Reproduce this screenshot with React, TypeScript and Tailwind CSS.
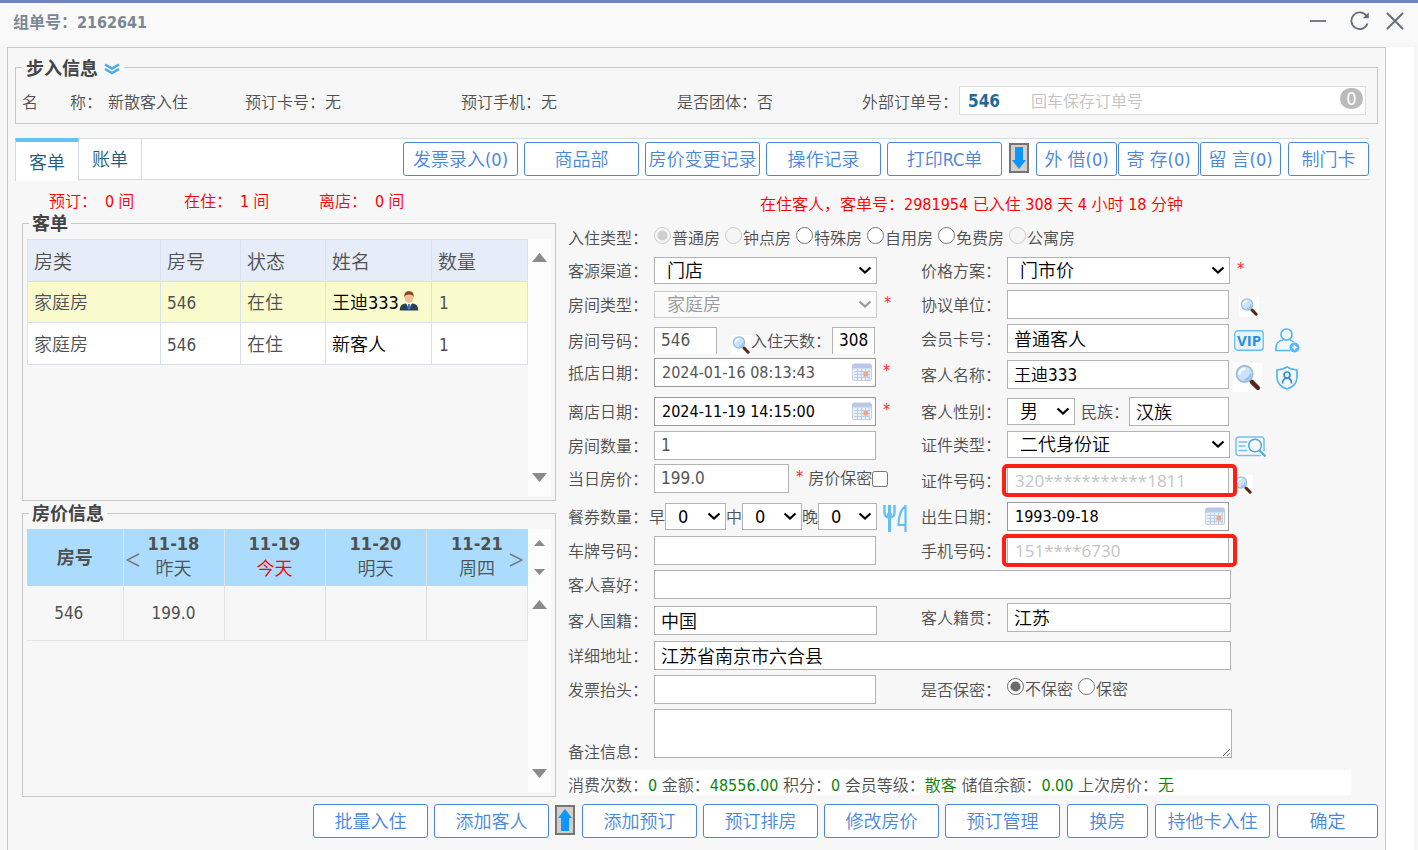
import React from 'react';
import type { ReactNode } from 'react';

const field = 'min-w-0 border border-[#b3b3b3] bg-white px-1.5 pb-0.5 outline-none';

function DoubleChevron() {
  return (
    <svg width="16" height="12" viewBox="0 0 16 12" fill="none" stroke="#4aa9e9" strokeWidth="2.400">
      <path d="M1 1.500 8 5.500 15 1.500" />
      <path d="M1 6 8 10 15 6" />
    </svg>
  );
}

function Magnifier({ className }: { className: string }) {
  return (
    <svg className={className} viewBox="0 0 20 20">
      <rect width="20" height="20" fill="#fff" />
      <path d="M11.500 11.500 17 17" stroke="#c9a58f" strokeWidth="2" />
      <path d="M13 13 17.200 17.200" stroke="#5a2312" strokeWidth="3" strokeLinecap="round" />
      <circle cx="8" cy="7.500" r="5.600" fill="#c9e3fa" stroke="#9dbcdc" strokeWidth="1.300" />
      <path d="M4.500 8a3.600 3.600 0 0 1 4-4" stroke="#fff" strokeWidth="1.600" fill="none" />
      <path d="M8 11.500a4 4 0 0 0 4-4" stroke="#8cc0f0" strokeWidth="1.400" fill="none" />
    </svg>
  );
}

function CalendarIcon() {
  return (
    <svg width="20" height="18" viewBox="0 0 20 18" className="pointer-events-none absolute right-1 top-[5px]">
      <rect x="0.500" y="1.500" width="19" height="16" rx="1.500" fill="#e9f0fa" stroke="#c9cfdb" />
      <rect x="0.500" y="0.500" width="19" height="5" rx="1.500" fill="#b9c8e8" />
      <path d="M2 8.500h16M2 11.500h16M2 14.500h16M5.500 6v11M9.500 6v11M13.500 6v11M17 6v11" stroke="#b3c7e8" strokeWidth="0.900" />
      <rect x="11.500" y="9" width="4.500" height="4.500" fill="#f6a488" />
    </svg>
  );
}

function PersonIcon() {
  return (
    <svg width="20" height="20" viewBox="0 0 20 20" className="mb-1">
      <path d="M.8 19.500c0-4.600 1.600-6.500 5.700-7h7c4.100.5 5.700 2.400 5.700 7z" fill="#2f3e52" />
      <path d="M7 12h6l-3 6z" fill="#fff" />
      <path d="M9.200 13h1.600l.8 4-1.600 2.500L8.400 17z" fill="#2b7bd6" />
      <ellipse cx="10" cy="6.500" rx="4.200" ry="5.400" fill="#f3bf98" />
      <path d="M5.500 6.500C4.800 2 7 .3 10 .3s5.400 1.700 4.500 6.200c-.5-2.300-1.500-3-4.500-3s-4 .7-4.500 3z" fill="#8a4323" />
    </svg>
  );
}

function ArrowSquare({ down, label }: { down?: boolean; label: string }) {
  return (
    <button type="button" aria-label={label} className="flex h-[30px] w-5 items-center justify-center border-2 border-[#757575] bg-[#d4d0c8]">
      <svg width="14" height="22" viewBox="0 0 14 22" className={down ? 'shrink-0' : 'shrink-0 rotate-180'}>
        <path d="M3 0h8v13h3l-7 9-7-9h3z" fill="#0a97ff" />
      </svg>
    </button>
  );
}

function Triangle({ up, small }: { up?: boolean; small?: boolean }) {
  return (
    <svg width={small ? 11 : 15} height={small ? 6 : 9} viewBox="0 0 14 8" preserveAspectRatio="none">
      <path d={up ? 'M7 0 14 8H0z' : 'M0 0h14L7 8z'} fill="#8b8b8b" />
    </svg>
  );
}

function Select({ id, value, className, disabled }: { id: string; value: string; className: string; disabled?: boolean }) {
  return (
    <span className={`relative block h-[27px] ${className}`}>
      <select
        id={id}
        disabled={disabled}
        className="block h-full w-full appearance-none border border-[#b3b3b3] bg-white pl-3 text-[18px] leading-[24px] text-black opacity-100 outline-none disabled:border-[#ccc] disabled:bg-[#fafafa] disabled:text-[#999]"
      >
        <option>{value}</option>
      </select>
      <svg width="14" height="9" viewBox="0 0 14 9" className="pointer-events-none absolute right-[5px] top-[9px]">
        <path d="M1.500 1.500 7 6.500l5.500-5" fill="none" stroke={disabled ? '#999' : '#000'} strokeWidth="2.200" />
      </svg>
    </span>
  );
}

function Row({ label, id, className, children }: { label: string; id?: string; className: string; children: ReactNode }) {
  return (
    <div className={`flex items-center ${className}`}>
      <label htmlFor={id} className="w-[86px] shrink-0 whitespace-nowrap pt-0.5">{label}</label>
      {children}
    </div>
  );
}

function Star() {
  return <span className="mb-1 ml-[7px] text-[16px] leading-4 text-[#ff2a2a]">*</span>;
}

function Radio({ name, label, checked, disabled }: { name: string; label: string; checked?: boolean; disabled?: boolean }) {
  return (
    <label className="flex items-start gap-px whitespace-nowrap">
      <input type="radio" name={name} defaultChecked={checked} disabled={disabled} className="-mt-px size-[17px] accent-[#6b6b6b]" />
      <span className="leading-[22px]">{label}</span>
    </label>
  );
}

function ActionButton({ children, className }: { children: ReactNode; className: string }) {
  return (
    <button type="button" className={`h-[34px] whitespace-nowrap rounded-[3px] border border-[#4a87dc] bg-white pt-0.5 text-[18px] leading-[30px] text-[#4a87dc] ${className}`}>
      {children}
    </button>
  );
}

function DateField({ id, value, muted }: { id: string; value: string; muted?: boolean }) {
  return (
    <span className="relative block h-[29px] w-[222px]">
      <input id={id} defaultValue={value} className={`h-full w-full border border-[#999] bg-white pl-[7px] text-[16px] outline-none ${muted ? 'text-[#555]' : 'text-black'}`} />
      <CalendarIcon />
    </span>
  );
}

function MarkedField({ id, value }: { id: string; value: string }) {
  return (
    <span className="relative block h-[29px] w-[222px]">
      <input id={id} placeholder={value} className="h-full w-full border border-[#b3b3b3] bg-white pl-[7px] font-['Open_Sans',sans-serif] text-[17px] font-normal outline-none placeholder:text-[#c4c4c4]" />
      <span className="pointer-events-none absolute -inset-y-0.5 -left-[5px] -right-2 z-10 rounded-[5px] border-4 border-[#ff2014]" />
    </span>
  );
}

const guests = [
  { type: '家庭房', room: '546', state: '在住', name: '王迪333', count: '1', active: true },
  { type: '家庭房', room: '546', state: '在住', name: '新客人', count: '1', active: false },
];

const days = [
  { date: '11-18', name: '昨天', price: '199.0' },
  { date: '11-19', name: '今天', price: '' },
  { date: '11-20', name: '明天', price: '' },
  { date: '11-21', name: '周四', price: '' },
];

const stats = [
  ['消费次数：', '0'],
  ['金额：', '48556.00'],
  ['积分：', '0'],
  ['会员等级：', '散客'],
  ['储值余额：', '0.00'],
  ['上次房价：', '无'],
];

function GuestPanel() {
  return (
    <fieldset className="h-[289px] border border-[#c8c8c8] px-1">
      <legend className="ml-0.5 px-[3px] pt-0.5 text-[18px] font-bold leading-5 text-[#444]">客单</legend>
      <div className="mt-[5px] flex h-[257px]">
        <div className="flex-1">
          <table className="w-full table-fixed border-collapse text-left text-[18px]">
            <colgroup>
              <col className="w-[133px]" />
              <col className="w-20" />
              <col className="w-[85px]" />
              <col className="w-[106px]" />
              <col />
            </colgroup>
            <thead>
              <tr className="h-[42px] bg-[#e6edf9] text-[19px]">
                {['房类', '房号', '状态', '姓名', '数量'].map((h) => (
                  <th key={h} className="border border-[#d8e0ee] px-1.5 pt-0.5 font-[350] leading-6">{h}</th>
                ))}
              </tr>
            </thead>
            <tbody>
              {guests.map((g) => (
                <tr key={g.name} className={g.active ? 'h-[41px] bg-[#fafbcd]' : 'h-[42px] bg-white'}>
                  <td className="border border-[#d8e0ee] px-1.5 pt-0.5 leading-6">{g.type}</td>
                  <td className="border border-[#d8e0ee] px-1.5 pt-0.5 text-[17px] leading-6">{g.room}</td>
                  <td className="border border-[#d8e0ee] px-1.5 pt-0.5 leading-6">{g.state}</td>
                  <td className="border border-[#d8e0ee] px-1.5 pt-0.5 leading-6 text-black">
                    <span className="flex items-center">
                      {g.name}
                      {g.active && <PersonIcon />}
                    </span>
                  </td>
                  <td className="border border-[#d8e0ee] px-[7px] pt-0.5 text-[17px] leading-6">{g.count}</td>
                </tr>
              ))}
            </tbody>
          </table>
        </div>
        <div className="flex w-[23px] flex-col items-center justify-between bg-[#fcfcfc] py-3.5">
          <Triangle up />
          <Triangle />
        </div>
      </div>
    </fieldset>
  );
}

function PricePanel() {
  return (
    <fieldset className="mt-px h-[295px] border border-[#c8c8c8] px-1">
      <legend className="ml-0.5 px-[3px] pt-0.5 text-[18px] font-bold leading-5 text-[#444]">房价信息</legend>
      <div className="mt-[5px] flex h-[263px]">
        <div className="flex-1">
          <table className="w-full table-fixed border-collapse text-center">
            <colgroup>
              <col className="w-24" />
              <col className="w-[101px]" />
              <col className="w-[101px]" />
              <col className="w-[101px]" />
              <col />
            </colgroup>
            <thead>
              <tr className="h-[57px] bg-[#acdcfd] text-[18px]">
                <th className="font-bold">房号</th>
                {days.map((d, i) => (
                  <th key={d.date} className="relative border-l border-[#e2e2e2] p-0 pb-0.5 font-[350]">
                    <span className="block font-bold leading-6">{d.date}</span>
                    <span className={d.name === '今天' ? 'block leading-[26px] text-[#ff0000]' : 'block leading-[26px]'}>{d.name}</span>
                    {i === 0 && (
                      <button type="button" aria-label="前几天" className="absolute left-0.5 top-6">
                        <svg width="14" height="14" viewBox="0 0 14 14" fill="none" stroke="#777" strokeWidth="1.500"><path d="M13 1 1 7l12 6" /></svg>
                      </button>
                    )}
                    {i === 3 && (
                      <button type="button" aria-label="后几天" className="absolute right-[5px] top-6">
                        <svg width="14" height="14" viewBox="0 0 14 14" fill="none" stroke="#777" strokeWidth="1.500"><path d="M1 1l12 6-12 6" /></svg>
                      </button>
                    )}
                  </th>
                ))}
              </tr>
            </thead>
            <tbody>
              <tr className="h-[54px] border-b border-[#e2e2e2] text-[17px]">
                <td className="pr-3">546</td>
                {days.map((d) => (
                  <td key={d.date} className="border-x border-[#e2e2e2] p-0">{d.price}</td>
                ))}
              </tr>
            </tbody>
          </table>
        </div>
        <div className="flex w-[23px] flex-col items-center bg-[#fcfcfc]">
          <div className="flex h-[57px] flex-col items-center justify-between py-[11px]">
            <Triangle up small />
            <Triangle small />
          </div>
          <div className="flex flex-1 flex-col items-center justify-between py-3.5">
            <Triangle up />
            <Triangle />
          </div>
        </div>
      </div>
    </fieldset>
  );
}

function GuestForm() {
  return (
    <form className="min-w-0 flex-1 pr-[27px]">
      <div className="flex h-12 items-center whitespace-nowrap pl-48 pt-0.5 text-[#ff0000]">
        在住客人，客单号：2981954 已入住 308 天 4 小时 18 分钟
      </div>
      <div className="flex h-5 items-start">
        <span className="w-[86px] shrink-0 leading-[22px]">入住类型：</span>
        <div className="flex gap-[5px]">
          <Radio name="stay" label="普通房" checked disabled />
          <Radio name="stay" label="钟点房" disabled />
          <Radio name="stay" label="特殊房" />
          <Radio name="stay" label="自用房" />
          <Radio name="stay" label="免费房" />
          <Radio name="stay" label="公寓房" disabled />
        </div>
      </div>

      <div className="mt-[9px] grid grid-cols-[353px_1fr]">
        <div>
          <Row label="客源渠道：" id="channel" className="h-[27px]">
            <Select id="channel" value="门店" className="w-[223px]" />
          </Row>
          <Row label="房间类型：" id="roomType" className="mt-[7px] h-[27px]">
            <Select id="roomType" value="家庭房" className="w-[223px]" disabled />
            <Star />
          </Row>
          <Row label="房间号码：" id="roomNo" className="mt-[9px] h-[27px]">
            <input id="roomNo" defaultValue="546" className={`${field} h-full w-[63px] border-b-0 text-[17px] text-[#555]`} />
            <Magnifier className="ml-3.5 mt-2 size-5 shrink-0" />
            <label htmlFor="nights" className="w-[81px] whitespace-nowrap pt-0.5">入住天数：</label>
            <input id="nights" defaultValue="308" className={`${field} h-full w-[43px] border-b-0 text-[17px] text-black`} />
          </Row>
          <Row label="抵店日期：" id="arrive" className="mt-1 h-[29px]">
            <DateField id="arrive" value="2024-01-16 08:13:43" muted />
            <Star />
          </Row>
          <Row label="离店日期：" id="leave" className="mt-2.5 h-[29px]">
            <DateField id="leave" value="2024-11-19 14:15:00" />
            <Star />
          </Row>
          <Row label="房间数量：" id="rooms" className="mt-[5px] h-[29px]">
            <input id="rooms" defaultValue="1" className={`${field} h-full w-[222px] text-[17px] text-[#555]`} />
          </Row>
          <Row label="当日房价：" id="price" className="mt-1 h-[29px]">
            <input id="price" defaultValue="199.0" className={`${field} h-full w-[135px] text-[17px] text-[#555]`} />
            <Star />
            <label htmlFor="hidePrice" className="ml-[5px] whitespace-nowrap">房价保密</label>
            <input id="hidePrice" type="checkbox" className="size-4" />
          </Row>
          <div className="mt-2.5 flex h-[27px] items-center">
            <span className="w-[81px] shrink-0 pt-0.5">餐券数量：</span>
            <label htmlFor="breakfast" className="pt-0.5">早</label>
            <Select id="breakfast" value="0" className="w-[61px]" />
            <label htmlFor="lunch" className="pt-0.5">中</label>
            <Select id="lunch" value="0" className="w-[60px]" />
            <label htmlFor="dinner" className="pt-0.5">晚</label>
            <Select id="dinner" value="0" className="w-[59px]" />
            <svg width="24" height="27" viewBox="0 0 24 27" fill="none" stroke="#63bff7" strokeWidth="2.200" className="ml-1.5 mt-1 shrink-0">
              <path d="M1.500 0v8c0 3 2 4.500 5 4.500s5-1.500 5-4.500V0" strokeWidth="2.400" />
              <path d="M6.500 0v27" strokeWidth="3" />
              <path d="M4 8.500h5v4H4z" fill="#63bff7" stroke="none" />
              <path d="M22.500 0v27M22.500 1.500c-4 2-7 9-7 18.500h7" />
            </svg>
          </div>
          <Row label="车牌号码：" id="plate" className="mt-1.5 h-[29px]">
            <input id="plate" className={`${field} h-full w-[222px] text-[18px] text-black`} />
          </Row>
        </div>

        <div>
          <Row label="价格方案：" id="plan" className="h-[27px]">
            <Select id="plan" value="门市价" className="w-[223px]" />
            <Star />
          </Row>
          <Row label="协议单位：" id="company" className="mt-1.5 h-[29px]">
            <input id="company" className={`${field} h-full w-[222px] text-[18px] text-black`} />
            <Magnifier className="ml-2.5 mt-1 size-5 shrink-0" />
          </Row>
          <Row label="会员卡号：" id="card" className="mt-[5px] h-[29px]">
            <input id="card" defaultValue="普通客人" className={`${field} h-full w-[222px] text-[18px] text-black`} />
            <svg width="30" height="21" viewBox="0 0 30 21" className="ml-[5px] mt-1 shrink-0">
              <rect x="0.750" y="0.750" width="28.500" height="19.500" rx="3" fill="#e6f4fe" stroke="#66bdf2" strokeWidth="1.300" />
              <text x="15" y="16" textAnchor="middle" fontFamily="Open Sans, sans-serif" fontWeight="700" fontSize="15" fill="#2a8fdd">VIP</text>
            </svg>
            <svg width="25" height="25" viewBox="0 0 25 25" className="ml-[11px] mt-1 shrink-0" fill="none" stroke="#4db8f8" strokeWidth="1.700">
              <circle cx="11.500" cy="6.500" r="5.500" />
              <path d="M15 22.500H1v-2.500c0-4.500 3-7.500 7-8M15 12c1.500.3 2.500 1 3.500 2" />
              <circle cx="19.500" cy="19.500" r="5" fill="#4db8f8" stroke="none" />
              <path d="M19.500 16.800v5.400M16.800 19.500h5.400" stroke="#fff" strokeWidth="1.400" />
            </svg>
          </Row>
          <Row label="客人名称：" id="guestName" className="mt-[7px] h-[29px]">
            <input id="guestName" defaultValue="王迪333" className={`${field} h-full w-[222px] text-[17px] text-black`} />
            <Magnifier className="ml-1 mt-1.5 size-[29px] shrink-0" />
            <svg width="22" height="24" viewBox="0 0 22 24" className="ml-3.5 mt-1.5 shrink-0" fill="none" stroke="#4db8f8" strokeWidth="1.700">
              <path d="M11 1c3 2 6 2.800 10 3v7c0 6-4 10-10 12C5 21 1 17 1 11V4c4-.2 7-1 10-3z" />
              <circle cx="11" cy="9" r="3" stroke="#2f8fd6" />
              <path d="M6.500 17.500c0-3 1.500-5.300 4.500-5.300s4.500 2.300 4.500 5.300" stroke="#2f8fd6" />
            </svg>
          </Row>
          <Row label="客人性别：" id="sex" className="mt-2 h-[29px]">
            <Select id="sex" value="男" className="w-[68px]" />
            <label htmlFor="nation" className="ml-1.5 w-12 whitespace-nowrap pt-0.5">民族：</label>
            <input id="nation" defaultValue="汉族" className={`${field} h-full w-[100px] text-[18px] text-black`} />
          </Row>
          <Row label="证件类型：" id="idType" className="mt-[5px] h-[27px]">
            <Select id="idType" value="二代身份证" className="w-[223px]" />
            <svg width="31" height="21" viewBox="0 0 31 21" className="ml-[5px] mt-1 shrink-0" fill="none" stroke="#6fc3f5" strokeWidth="1.500">
              <path d="M26 19.500H3.500a2.500 2.500 0 0 1-2.500-2.500V3.500A2.500 2.500 0 0 1 3.500 1h23A2.500 2.500 0 0 1 29 3.500V15" />
              <path d="M3.500 6h9M3.500 10h7M3.500 14.500h9" />
              <circle cx="20" cy="9.500" r="6.300" stroke="#45a8ea" />
              <path d="M24.500 14.500l6 6" stroke="#45a8ea" strokeWidth="2" />
            </svg>
          </Row>
          <Row label="证件号码：" id="idNo" className="mt-2 h-[29px]">
            <MarkedField id="idNo" value="320***********1811" />
            <Magnifier className="ml-1 mt-2 size-5 shrink-0" />
          </Row>
          <Row label="出生日期：" id="birth" className="mt-[7px] h-[29px]">
            <DateField id="birth" value="1993-09-18" />
          </Row>
          <Row label="手机号码：" id="phone" className="mt-[5px] h-[29px]">
            <MarkedField id="phone" value="151****6730" />
          </Row>
        </div>
      </div>

      <Row label="客人喜好：" id="likes" className="mt-[5px] h-[29px]">
        <input id="likes" className={`${field} h-full w-[577px] text-[18px] text-black`} />
      </Row>
      <div className="mt-1 grid grid-cols-[353px_1fr]">
        <Row label="客人国籍：" id="country" className="mt-[3px] h-[29px]">
          <input id="country" defaultValue="中国" className={`${field} h-full w-[223px] text-[18px] text-black`} />
        </Row>
        <Row label="客人籍贯：" id="origin" className="h-[29px]">
          <input id="origin" defaultValue="江苏" className={`${field} h-full w-[224px] text-[18px] text-black`} />
        </Row>
      </div>
      <Row label="详细地址：" id="address" className="mt-1.5 h-[29px]">
        <input id="address" defaultValue="江苏省南京市六合县" className={`${field} h-full w-[577px] text-[18px] text-black`} />
      </Row>
      <div className="mt-[5px] grid grid-cols-[353px_1fr]">
        <Row label="发票抬头：" id="invoice" className="h-[29px]">
          <input id="invoice" className={`${field} h-full w-[222px] text-[18px] text-black`} />
        </Row>
        <Row label="是否保密：" className="h-[29px]">
          <div className="flex gap-[5px]">
            <Radio name="secret" label="不保密" checked />
            <Radio name="secret" label="保密" />
          </div>
        </Row>
      </div>
      <div className="mt-[5px] flex items-end">
        <label htmlFor="remark" className="w-[86px] shrink-0 leading-[10px]">备注信息：</label>
        <textarea id="remark" className="block h-[49px] w-[578px] border border-[#b3b3b3] bg-white outline-none" />
      </div>
      <div className="mt-3 h-[25px] whitespace-nowrap bg-white leading-8">
        {stats.map(([label, value]) => (
          <React.Fragment key={label}>
            {label}
            <span className="text-[#0a850a]">{value}</span>{' '}
          </React.Fragment>
        ))}
      </div>
    </form>
  );
}

export default function App() {
  return (
    <div className="flex min-h-screen flex-col overflow-hidden border-t-[3px] border-[#6f86bb] bg-[#f7f7f7] font-['DejaVu_Sans_Condensed','Noto_Sans_CJK_SC',sans-serif] text-[16px] font-[350] leading-5 text-[#505050]">
      <header className="flex h-10 shrink-0 items-center justify-between bg-[#f9f9fa] pl-[13px] pr-3.5">
        <h1 className="font-bold text-[#7b8792]">组单号：2162641</h1>
        <div className="mb-1 flex items-center text-[#666e78]">
          <button type="button" aria-label="最小化">
            <svg width="16" height="18" viewBox="0 0 16 18" stroke="currentColor" strokeWidth="1.800"><path d="M0 9h16" /></svg>
          </button>
          <button type="button" aria-label="刷新" className="ml-6">
            <svg width="20" height="20" viewBox="0 0 20 20" fill="none" stroke="currentColor" strokeWidth="1.800">
              <path d="M17.500 12.500A8.300 8.300 0 1 1 16.500 5" />
              <path d="M18.800 1.500v5.700h-6z" fill="currentColor" stroke="none" />
            </svg>
          </button>
          <button type="button" aria-label="关闭" className="ml-4">
            <svg width="18" height="18" viewBox="0 0 18 18" fill="none" stroke="currentColor" strokeWidth="2"><path d="M1 1l16 16M17 1 1 17" /></svg>
          </button>
        </div>
      </header>

      <div className="mt-1 flex flex-1 pl-[7px] pr-1">
        <main className="min-w-0 flex-1 border border-b-0 border-[#c8c8c8] px-[7px] pt-[7px]">
          <fieldset className="border border-[#c8c8c8] pb-2 pl-1.5 pr-[11px]">
            <legend className="flex items-center gap-1.5 px-1 pt-1 text-[18px] font-bold leading-5 text-[#444]">
              步入信息
              <DoubleChevron />
            </legend>
            <div className="mt-[7px] grid h-[29px] grid-cols-[223fr_216fr_216fr_185fr_504fr] items-center whitespace-nowrap">
              <span className="flex gap-1.5 pt-1"><span className="whitespace-pre">名　　称：</span><span>新散客入住</span></span>
              <span className="pt-1">预订卡号：无</span>
              <span className="pt-1">预订手机：无</span>
              <span className="pt-1">是否团体：否</span>
              <span className="flex h-full items-center">
                <label htmlFor="outer" className="w-[97px] shrink-0 pt-1">外部订单号：</label>
                <span className="flex h-full flex-1 items-center border border-[#ddd] bg-white pl-2 pr-0.5">
                  <b className="w-[63px] shrink-0 text-[17px] font-bold text-[#1d6a9c]">546</b>
                  <input id="outer" placeholder="回车保存订单号" className="min-w-0 flex-1 pt-0.5 outline-none placeholder:text-[#c4c4c4]" />
                  <span className="mb-1 flex h-[21px] w-[23px] items-center justify-center rounded-full bg-[#bbb] text-[18px] font-normal text-white">0</span>
                </span>
              </span>
            </div>
          </fieldset>

          <div className="mr-[9px] mt-3.5 flex h-[42px] border-y border-[#d3dcde] bg-white text-[18px] text-[#245c7c]">
            <a href="#guest" className="-mb-0.5 -mt-px flex w-16 items-center justify-center border-x border-t-4 border-[#d3dcde] border-t-[#62c4f3] bg-white pt-0.5">客单</a>
            <a href="#bill" className="flex w-[63px] items-center justify-center border-r border-[#d3dcde] pt-0.5">账单</a>
            <div className="ml-auto flex gap-[7px] pt-[3px]">
              <div className="flex gap-1.5">
                {['发票录入(0)', '商品部', '房价变更记录', '操作记录', '打印RC单'].map((t) => (
                  <ActionButton key={t} className="w-[115px]">{t}</ActionButton>
                ))}
              </div>
              <span className="pt-px"><ArrowSquare down label="更多" /></span>
              <div className="flex gap-px">
                {['外 借(0)', '寄 存(0)', '留 言(0)'].map((t) => (
                  <ActionButton key={t} className="w-[81px]">{t}</ActionButton>
                ))}
              </div>
              <ActionButton className="w-[81px]">制门卡</ActionButton>
            </div>
          </div>

          <div className="flex gap-3 pl-[7px]">
            <section className="w-[534px] shrink-0">
              <div className="flex h-8 pl-[27px] pt-2.5 leading-6 text-[#ff0000]">
                {[['预订：', '0'], ['在住：', '1'], ['离店：', '0']].map(([k, v]) => (
                  <span key={k} className="flex w-[135px] gap-2">
                    <span>{k}</span>
                    <span className="flex gap-1"><span>{v}</span><span>间</span></span>
                  </span>
                ))}
              </div>
              <GuestPanel />
              <PricePanel />
            </section>
            <GuestForm />
          </div>

          <footer className="mt-[7px] flex justify-end gap-[7px]">
            <div className="flex items-start gap-1.5">
              <ActionButton className="w-[115px]">批量入住</ActionButton>
              <ActionButton className="w-[115px]">添加客人</ActionButton>
              <span className="pt-px"><ArrowSquare label="收起" /></span>
            </div>
            <div className="flex gap-1.5">
              {['添加预订', '预订排房', '修改房价', '预订管理'].map((t) => (
                <ActionButton key={t} className="w-[115px]">{t}</ActionButton>
              ))}
            </div>
            <ActionButton className="w-[81px]">换房</ActionButton>
            <ActionButton className="w-[115px]">持他卡入住</ActionButton>
            <ActionButton className="w-[101px]">确定</ActionButton>
          </footer>
        </main>
        <div className="w-7 shrink-0 bg-white" />
      </div>
    </div>
  );
}
